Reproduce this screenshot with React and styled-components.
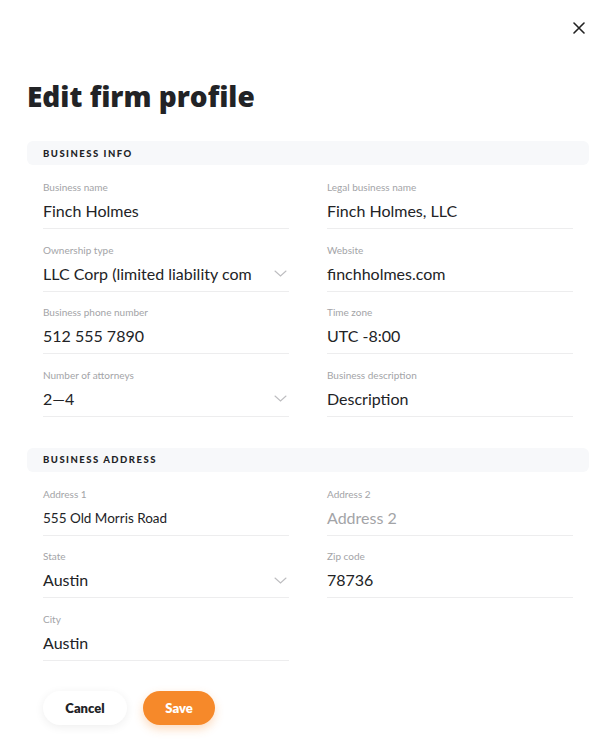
import React from "react";
import styled, { createGlobalStyle } from "styled-components";

const Global = createGlobalStyle`
  body {
    margin: 0;
    background: #ffffff;
    font-family: Lato, "Noto Sans", sans-serif;
    color: #222326;
  }
`;

const sections = [
  {
    title: "BUSINESS INFO",
    fields: [
      { label: "Business name", value: "Finch Holmes" },
      { label: "Legal business name", value: "Finch Holmes, LLC" },
      { label: "Ownership type", value: "LLC Corp (limited liability com", select: true },
      { label: "Website", value: "finchholmes.com" },
      { label: "Business phone number", value: "512 555 7890" },
      { label: "Time zone", value: "UTC -8:00" },
      { label: "Number of attorneys", value: "2—4", select: true },
      { label: "Business description", value: "Description" },
    ],
  },
  {
    title: "BUSINESS ADDRESS",
    fields: [
      { label: "Address 1", value: "555 Old Morris Road", small: true },
      { label: "Address 2", placeholder: "Address 2" },
      { label: "State", value: "Austin", select: true },
      { label: "Zip code", value: "78736" },
      { label: "City", value: "Austin" },
    ],
  },
];

const App = () => {
  return (
    <Page>
      <Global />
      <CloseRow>
        <CloseButton aria-label="Close">
          <svg width="12" height="12" viewBox="0 0 12 12">
            <path d="M1 1L11 11M11 1L1 11" stroke="#222" strokeWidth="1.6" strokeLinecap="round" />
          </svg>
        </CloseButton>
      </CloseRow>
      <Title>Edit firm profile</Title>
      {sections.map((s, i) => (
        <Section key={s.title} $first={i === 0}>
          <SectionHeader>{s.title}</SectionHeader>
          <Grid>
            {s.fields.map(f => (
              <Field key={f.label}>
                <Label>{f.label}</Label>
                <ValueRow>
                  <Value $small={f.small} $placeholder={!f.value}>
                    {f.value || f.placeholder}
                  </Value>
                  {f.select && (
                    <Chevron width="13" height="7" viewBox="0 0 13 7">
                      <path d="M1 1L6.5 6L12 1" stroke="#bdbdc0" strokeWidth="1.1" fill="none" strokeLinecap="round" />
                    </Chevron>
                  )}
                </ValueRow>
              </Field>
            ))}
          </Grid>
        </Section>
      ))}
      <Actions>
        <CancelButton>Cancel</CancelButton>
        <SaveButton>Save</SaveButton>
      </Actions>
    </Page>
  );
};

export default App;

const Page = styled.div`
  width: 612px;
  box-sizing: border-box;
  padding: 0 23px 30px 27px;
`;

const CloseRow = styled.div`
  height: 56px;
  display: flex;
  align-items: center;
  justify-content: flex-end;
  padding-right: 1px;
`;

const CloseButton = styled.button`
  width: 18px;
  height: 18px;
  padding: 0;
  border: none;
  background: none;
  display: flex;
  align-items: center;
  justify-content: center;
`;

const Title = styled.h1`
  margin: 22px 0 27px;
  font-family: "Open Sans", Lato, sans-serif;
  font-size: 28px;
  line-height: 36px;
  font-weight: 800;
  color: #222326;
`;

const Section = styled.div`
  margin-top: ${p => (p.$first ? "0" : "31px")};
`;

const SectionHeader = styled.div`
  height: 24px;
  display: flex;
  align-items: center;
  padding: 0 16px;
  border-radius: 6px;
  background: #f7f8fa;
  font-size: 9.5px;
  font-weight: 900;
  letter-spacing: 1.5px;
  color: #222326;
`;

const Grid = styled.div`
  display: grid;
  grid-template-columns: 246px 246px;
  column-gap: 38px;
  row-gap: 14.5px;
  padding: 16px 16px 0;
`;

const Field = styled.div`
  display: flex;
  flex-direction: column;
  border-bottom: 1px solid #ededee;
  padding-bottom: 6px;
`;

const Label = styled.div`
  font-size: 10px;
  line-height: 12px;
  color: #a3a4a7;
  margin-bottom: 7px;
`;

const ValueRow = styled.div`
  display: flex;
  align-items: center;
  justify-content: space-between;
  gap: 10px;
  height: 22px;
`;

const Value = styled.div`
  flex: 1;
  min-width: 0;
  white-space: nowrap;
  font-size: ${p => (p.$small ? "13.5px" : "16px")};
  line-height: 22px;
  color: ${p => (p.$placeholder ? "#a3a4a7" : "#222326")};
`;

const Chevron = styled.svg`
  flex-shrink: 0;
  margin-right: 2px;
`;

const Actions = styled.div`
  display: flex;
  gap: 16px;
  padding: 30px 16px 0;
`;

const Button = styled.button`
  height: 34px;
  border: none;
  border-radius: 17px;
  font-family: inherit;
  font-size: 13px;
  font-weight: 800;
`;

const CancelButton = styled(Button)`
  width: 84px;
  background: #ffffff;
  color: #222326;
  box-shadow: 0 2px 10px rgba(0, 0, 0, 0.07);
`;

const SaveButton = styled(Button)`
  width: 72px;
  background: #f6892a;
  color: #ffffff;
  box-shadow: 0 4px 10px rgba(246, 137, 42, 0.3);
`;
